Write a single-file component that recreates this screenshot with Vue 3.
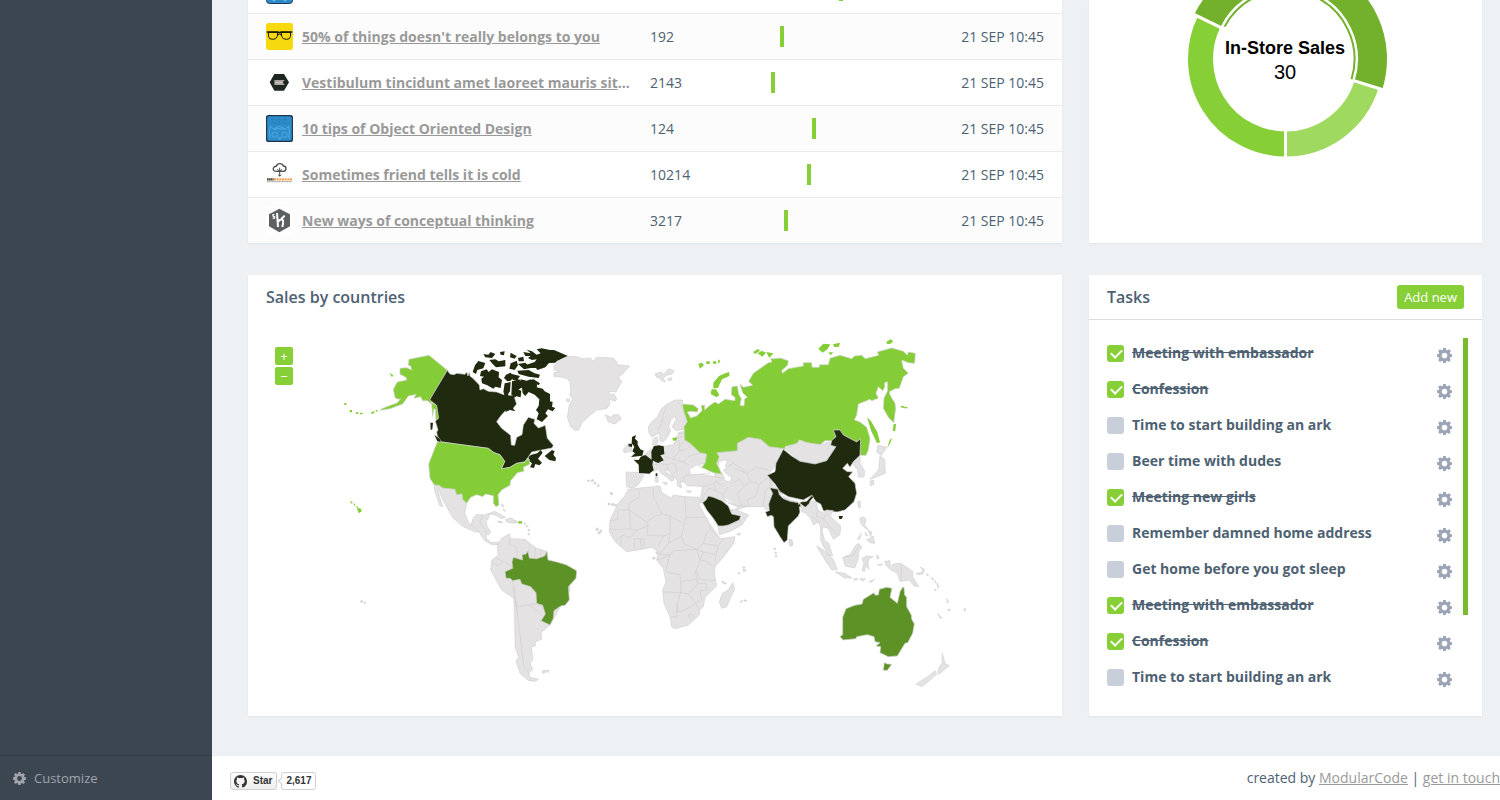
<script setup>
import { ref } from 'vue'

const rows = [
  { id: 1, icon: 'glasses', title: "50% of things doesn't really belongs to you", more: '', count: 192, mark: 20 },
  { id: 2, icon: 'hex', title: 'Vestibulum tincidunt amet laoreet mauris sit', more: '...', count: 2143, mark: 15.5 },
  { id: 3, icon: 'blue', title: '10 tips of Object Oriented Design', more: '', count: 124, mark: 36 },
  { id: 4, icon: 'cloud', title: 'Sometimes friend tells it is cold', more: '', count: 10214, mark: 33.5 },
  { id: 5, icon: 'kube', title: 'New ways of conceptual thinking', more: '', count: 3217, mark: 22 }
]

const tasks = ref([
  { id: 1, text: 'Meeting with embassador', done: true },
  { id: 2, text: 'Confession', done: true },
  { id: 3, text: 'Time to start building an ark', done: false },
  { id: 4, text: 'Beer time with dudes', done: false },
  { id: 5, text: 'Meeting new girls', done: true },
  { id: 6, text: 'Remember damned home address', done: false },
  { id: 7, text: 'Get home before you got sleep', done: false },
  { id: 8, text: 'Meeting with embassador', done: true },
  { id: 9, text: 'Confession', done: true },
  { id: 10, text: 'Time to start building an ark', done: false }
])

const cx = 196.5
const cy = 59
const point = (r, deg) => {
  const a = (deg * Math.PI) / 180
  return `${(cx + r * Math.cos(a)).toFixed(2)},${(cy + r * Math.sin(a)).toFixed(2)}`
}
const sector = (inner, outer, from, to) => {
  const large = to - from > 180 ? 1 : 0
  return `M${point(outer, from)} A${outer},${outer} 0 ${large} 1 ${point(outer, to)} L${point(inner, to)} A${inner},${inner} 0 ${large} 0 ${point(inner, from)}Z`
}
const arc = (r, from, to) => `M${point(r, from)} A${r},${r} 0 ${to - from > 180 ? 1 : 0} 1 ${point(r, to)}`
const slices = [
  { color: '#9fd95f', d: sector(71, 99, 17.5, 90) },
  { color: '#86cf36', d: sector(71, 99, 90, 206) },
  { color: '#73b02c', d: sector(71, 103, 206, 377.5) }
]

const gear = 'M6.6 0h2.8l.4 2 1.3.5L12.800 1.300l2 2-1.200 1.700.5 1.300 1.900.300v2.800l-1.900.400-.5 1.300 1.200 1.700-2 2-1.700-1.200-1.300.5-.4 2H6.600l-.4-2-1.300-.5-1.700 1.200-2-2 1.200-1.700-.5-1.300L0 9.400V6.600l1.900-.3.5-1.300L1.200 3.300l2-2 1.700 1.200L6.200 2zM8 5a3 3 0 1 0 0 6a3 3 0 1 0 0-6z'
</script>

<template>
  <div class="app">
    <aside class="sidebar">
      <a href="#" class="customize">
        <svg class="cog" viewBox="0 0 16 16" aria-hidden="true"><path fill-rule="evenodd" :d="gear" /></svg>
        Customize
      </a>
    </aside>

    <div class="page">
      <main class="grid">
        <section class="card feed">
          <table>
            <colgroup><col class="c-title"><col class="c-count"><col class="c-chart"><col class="c-date"></colgroup>
            <tbody>
              <tr class="peek">
                <td>
                  <div class="peek-box">
                    <svg class="peek-icon" viewBox="0 0 27 27" aria-hidden="true">
                      <rect x=".5" y=".5" width="26" height="26" rx="3" fill="#2d8ac7" stroke="#1d3b5c" />
                      <path d="M7 24q7-6 13 0" fill="none" stroke="#65bdf0" stroke-width="2" />
                    </svg>
                  </div>
                </td>
                <td></td>
                <td><div class="peek-box"><div class="spark"><i class="tick" :style="{ marginLeft: '49.5%' }"></i></div></div></td>
                <td></td>
              </tr>
              <tr v-for="r in rows" :key="r.id">
                <td>
                  <div class="title">
                    <svg v-if="r.icon === 'glasses'" class="avatar" viewBox="0 0 81 81" aria-hidden="true">
                      <rect width="81" height="81" rx="8" fill="#f6d90f" />
                      <g fill="none" stroke="#171608" stroke-width="3">
                        <path d="M7 28q-1 14 4 19 9 4 18 0 7-5 6-19zM46 28q-1 14 6 19 9 4 18 0 5-5 4-19z" />
                        <path d="M2 27h33q6 3 11 0h33" stroke-width="5" />
                        <path d="M35 36q5-5 11 0" />
                      </g>
                    </svg>
                    <svg v-else-if="r.icon === 'hex'" class="avatar" viewBox="0 0 81 81" aria-hidden="true">
                      <path d="M25 15h29l15 25-15 25H25L11 40z" fill="#202720" />
                      <path d="M25 33h31l-6 7 6 8H25z" fill="#a9a4a2" />
                      <path d="M28 41h22" stroke="#d1cdcb" stroke-width="3" />
                    </svg>
                    <svg v-else-if="r.icon === 'blue'" class="avatar" viewBox="0 0 81 81" aria-hidden="true">
                      <rect x="1.500" y="1.500" width="78" height="78" rx="8" fill="#2c8dca" stroke="#20334d" stroke-width="4" />
                      <path d="M10 14h61M10 24h61M22 6v22M40 6v22M58 6v22" stroke="#2680ba" stroke-width="2" />
                      <g fill="none" stroke="#62b6e8" stroke-width="2">
                        <path d="M13 70q-5-20 0-36l10 8 12-6q5-2 10 0l13 6 10-8q5 16 0 36M24 44q16-8 32 0" />
                        <circle cx="26" cy="59" r="8" /><circle cx="56" cy="59" r="8" />
                        <path d="M35 68h12M36 72h10" />
                      </g>
                    </svg>
                    <svg v-else-if="r.icon === 'cloud'" class="avatar" viewBox="0 0 81 81" aria-hidden="true">
                      <g fill="none" stroke="#4b4f50" stroke-width="4">
                        <path d="M30 31q-10-1-8-9 2-7 9-6 2-8 11-8 8 0 10 7 8 0 8 8 0 7-8 8z" />
                        <path d="M41 20v23M34 24q2 6 7 6t7-6" stroke-width="3" />
                      </g>
                      <path d="M35 41h12l-6 6z" fill="#4b4f50" />
                      <path d="M3 55h20" stroke="#4b4036" stroke-width="7" stroke-dasharray="5 1" />
                      <path d="M24 55h54" stroke="#f0a04a" stroke-width="7" stroke-dasharray="6 2" />
                      <path d="M3 62h75" stroke="#9a9a9a" stroke-width="3" stroke-dasharray="4 1" />
                    </svg>
                    <svg v-else class="avatar" viewBox="0 0 81 81" aria-hidden="true">
                      <rect width="81" height="81" rx="8" fill="#fff" />
                      <path d="M40 5l32 17v36L40 76 9 58V22z" fill="#5d6061" />
                      <path d="M25 22q-6 0-4 5l5 3q1 5-6 4" fill="none" stroke="#fff" stroke-width="4" />
                      <path d="M33 18l3 42M36 45q5-10 13-7 5 3 0 22M46 36l10-10" fill="none" stroke="#fff" stroke-width="6" />
                    </svg>
                    <span class="clip"><a href="#">{{ r.title }}</a>{{ r.more }}</span>
                  </div>
                </td>
                <td>{{ r.count }}</td>
                <td><div class="spark"><i class="tick" :style="{ marginLeft: r.mark + '%' }"></i></div></td>
                <td class="date">21 SEP 10:45</td>
              </tr>
            </tbody>
          </table>
        </section>

        <section class="card donut">
          <svg viewBox="0 0 393 242" role="img" aria-label="In-Store Sales 30">
            <path v-for="s in slices" :key="s.d" :d="s.d" :fill="s.color" stroke="#fff" stroke-width="3" />
            <path :d="arc(69, 208, 377)" fill="none" stroke="#73b02c" stroke-width="2" />
            <text x="196" y="54" class="d-name">In-Store Sales</text>
            <text x="196" y="79" class="d-value">30</text>
          </svg>
        </section>

        <section class="card countries">
          <h2>Sales by countries</h2>
          <div class="map-wrap">
            <div class="zoomers">
              <button type="button" aria-label="Zoom in">+</button>
              <button type="button" aria-label="Zoom out">−</button>
            </div>
            <svg class="map" viewBox="266 338 778 360" aria-hidden="true">
              <!-- North America -->
              <g transform="translate(340 330) scale(.33333)">
                <path class="g" d="M282 464L298 466 308 474 345 478 350 494 366 492 368 508 380 520 374 548 386 580 408 588 420 580 426 558 446 550 448 560 438 575 442 590 452 605 446 615 430 606 405 606 370 590 340 565 322 535 302 495 298 478 294 480 300 505 308 530 300 528 285 486Z" />
                <path class="l" d="M267 76L322 121 270 208 274 218 290 225 296 262 288 272 286 238 282 236 278 260 275 222 262 212 248 212 242 200 222 205 228 193 205 198 188 222 150 236 120 241 125 236 172 218 182 206 176 208 165 203 160 178 172 156 200 150 198 142 180 133 180 115 200 113 215 120 212 108 205 106 207 88Z" />
                <path class="l isle" d="M148 128L160 136 156 142ZM106 240h8l-4 6zM94 246l10-2-2 6-8 2zM60 248h8v5h-8zM48 247h7v5h-7zM29 240h7v7h-7zM13 219h6v6h-6zM29 512l9 5-3 5zM40 519l6 4-3 5zM48 527l7 4-3 5zM51 536l9-2 6 9-10 7z" />
                <path class="d" d="M322 121L330 132 342 134 350 130 375 133 380 126 384 138 388 126 390 138 400 146 418 165 420 180 430 176 445 184 470 186 492 194 498 178 506 196 518 196 528 185 524 205 530 222 520 235 500 238 482 258 470 275 485 295 512 316 514 345 524 346 530 322 546 314 550 285 565 262 585 268 582 280 595 294 616 286 622 325 640 346 636 354 605 360 575 366 567 378 555 395 530 400 510 412 484 417 494 394 480 374 462 368 445 355 370 345 305 336 292 318 290 306 294 300 286 274 296 264 290 226 272 212 270 208Z" />
                <path class="d isle" d="M542 148L560 152 572 148 584 156 592 164 590 172 608 176 614 184 630 192 630 214 638 216 636 230 646 234 638 244 624 238 616 250 624 258 606 276 590 268 596 250 588 240 596 228 598 208 584 194 566 186 556 198 548 190 546 174 538 165ZM423 124L440 118 446 126 456 118 477 126 476 142 486 150 482 174 466 170 460 176 442 166 426 160 424 146 432 140 420 138ZM398 126L405 106 415 93 436 99 430 115 412 120 408 132ZM590 58L605 55 630 60 642 60 684 78 652 92 646 98 627 99 616 112 592 120 588 114 570 114 560 104 584 96 590 88 576 90 564 84 572 78 556 78 550 66 572 70 560 59 576 64 590 74 602 70ZM430 72L445 74 452 66 466 72 456 84 436 82ZM480 66L494 64 492 76 482 74ZM448 90L466 88 476 94 496 90 496 109 468 112 458 102ZM512 68L530 78 524 86 510 82ZM534 84L550 80 552 94 536 94ZM512 100L530 92 534 106 524 120 508 116ZM534 102L556 98 572 114 552 118ZM532 122L566 120 584 130 600 134 596 144 566 140 536 132ZM498 134L512 128 522 140 512 152 502 154 492 144ZM516 132L540 138 532 150 518 150ZM494 160L512 156 510 184 498 202 490 186ZM516 154L538 148 548 170 532 182 527 202 514 194ZM526 176L544 182 542 202 526 198ZM498 226L512 226 526 244 510 240 496 246ZM271 278h8l-2 20-5 2zM283 314L300 328 304 338 292 334ZM574 374L592 370 602 360 608 368 594 386 606 398 598 406 586 402 582 414 570 412 576 400 566 392 566 380ZM614 378L636 360 644 364 640 374 648 384 646 394 628 390ZM578 146l22 14-4 6-20-14z" />
                <path class="l" d="M305 336L445 355 462 368 480 374 494 394 484 417 510 412 530 400 555 397 560 388 568 388 570 402 550 412 552 424 532 428 512 452 510 466 485 480 474 494 477 525 468 530 460 520 460 497 436 492 428 500 410 494 392 502 380 520 368 508 366 492 350 494 345 478 308 474 298 466 282 464 270 445 266 402 280 366 292 336Z" />
              </g>

              <!-- Greenland, Iceland, Caribbean -->
              <g transform="translate(480 330) scale(.33333)">
                <path class="g" d="M222 108L240 90 260 80 290 80 306 86 330 84 340 94 350 82 400 84 412 98 408 104 450 108 440 118 430 130 415 142 426 155 416 170 408 186 388 184 388 194 402 192 410 206 406 214 388 208 390 222 380 236 350 240 330 256 306 278 296 300 286 302 272 290 262 262 268 225 278 208 270 196 272 184 270 156 262 146 240 140 222 140 222 128 240 124 222 120ZM376 254L392 262 400 254 416 254 424 266 405 282 385 276ZM260 206l10 2-2 8-8-2zM525 132L544 128 540 142 530 142ZM64 522l8 6-4 4zM70 536l6 6-4 2zM24 552L44 544 76 562 66 566 48 556 30 552ZM78 568l30 4 4 6-30-2zM52 574l12 2-4 4zM322 450h6v4h-6zM334 450l5-2 1 5-5 2zM344 458h4v4h-4zM354 464h3v3h-3zM392 488h4v6h-4zM386 520h4v4h-4zM396 522l6-2-2 6zM404 524h4v4h-4z" />
                <path class="l isle" d="M115 574h11v6h-11z" />
              </g>

              <!-- Europe and central Asia -->
              <g transform="translate(600 330) scale(.33333)">
                <path class="g" d="M145 290L158 272 172 262 184 236 202 222 225 210 248 210 246 220 250 240 260 268 256 290 252 298 228 302 216 290 228 270 226 258 212 270 206 292 212 302 202 322 190 336 180 332 178 308 156 322 147 308ZM160 326L172 320 174 334 168 346 158 344ZM166 132L184 126 190 134 206 116 222 122 216 132 198 136 190 146 196 156 184 152ZM202 148l12-6 2 8-8 2z" />
                <path class="g" d="M190 350L220 344 228 330 236 308 254 304 254 330 270 342 300 368 320 374 316 398 296 406 290 414 276 410 268 424 268 434 250 440 258 448 254 456 240 456 246 474 232 468 232 452 222 440 206 424 192 416 200 428 220 440 222 450 214 454 204 444 184 430 174 418 158 426 156 400 130 376 150 360ZM70 358L84 344 96 350 94 364 72 368ZM78 426L118 428 132 436 118 460 108 470 94 474 80 470ZM188 456l14 2-4 8zM166 442h8v14h-8zM258 484l16-2-4 6z" />
                <path class="g" d="M350 395L350 368 412 362 412 340 445 322 482 328 508 350 555 356 540 380 528 405 503 436 525 470 545 490 520 540 500 540 490 530 440 530 405 525 382 505 366 500 356 516 330 498 322 516 306 520 302 500 308 470 288 468 262 468 250 452 254 438 296 432 345 440 345 426 365 432 366 416Z" />
                <path class="b" d="M190 262L176 300M202 224L186 262M234 216L246 232M192 378L218 388 240 362 236 330M190 350L194 376M238 352L254 332M240 362L262 356 276 340M218 388L250 396 268 378 300 370M172 398L196 404 222 400 232 418 220 430M200 404L206 420M250 396L266 404M234 310L252 310M228 324L250 320M158 404L176 404M340 440L370 446M308 470L340 462 350 450M346 455L368 468M395 460L420 446 432 470 412 490 424 528M432 470L452 456 440 430 404 416M452 456L478 462 508 440M478 462L466 500 440 510 450 528M508 440L514 466 496 484 490 528M440 430L470 412 505 420M384 410L400 400 440 426M330 498L346 476 344 462M366 500L384 470" />
                <path class="w" d="M268 418L280 410 292 404 302 412 322 414 330 430 302 432 272 434ZM356 396L370 390 384 392 376 406 380 416 370 420 384 436 396 440 390 456 374 452 372 440 362 424 356 410Z" />
                <path class="l" d="M248 222L280 225 295 236 292 246 272 244 262 246 272 264 290 258 306 242 304 226 314 226 314 240 330 226 345 216 355 222 375 208 405 212 405 202 394 194 396 170 412 168 416 192 424 206 420 226 432 228 434 206 442 202 428 188 420 162 430 172 458 166 446 154 460 130 505 98 516 96 512 86 524 86 540 84 565 92 563 105 545 122 548 130 565 116 610 108 610 98 635 98 636 112 658 112 658 104 685 104 690 85 720 76 755 86 764 78 785 76 796 86 836 76 832 66 875 54 910 64 922 76 925 66 946 70 944 100 925 98 905 90 910 115 925 130 910 140 898 175 886 176 868 185 870 195 885 220 887 236 881 278 865 262 850 235 852 205 863 182 862 155 854 158 854 172 848 182 835 170 828 190 835 205 815 212 810 208 775 222 770 255 763 270 780 276 800 292 810 325 805 360 798 376 782 376 780 358 782 326 770 336 725 312 720 300 700 300 708 318 698 332 675 332 660 344 620 338 598 330 592 340 555 350 555 356 508 350 482 328 445 322 412 340 412 362 350 368 358 380 350 400 365 432 340 428 305 412 316 398 320 372 300 368 270 340 254 330 252 290 262 275 250 240Z" />
                <path class="l isle" d="M388 126L388 138 366 148 354 174 340 175 340 158 357 138 376 130ZM335 178L348 178 358 194 350 202 332 192ZM295 101L306 98 312 106 300 116ZM319 94h10v8h-10zM339 94h10v7h-10zM353 88l8 5-5 9zM459 66L474 57 480 62 466 72ZM473 70L486 62 498 68 487 80ZM499 66L520 70 508 84ZM655 56L670 41 691 43 683 57 668 68ZM699 43L720 38 717 50 703 51ZM685 67h15l-8 9zM861 34L872 28 880 34 870 42 859 41ZM801 262L813 274 832 306 840 337 831 340 814 304ZM881 282h7l-2 20-8 2zM869 330l7-6-5 15-9 14zM902 227l12 2-2 5-9-2zM217 325L230 321 230 331 219 332ZM913 231h9v4h-9z" />
                <path class="d isle" d="M96 321L108 315 105 326 113 334 113 344 121 358 131 362 127 377 93 381 105 370 97 364 103 350 95 340ZM85 341L96 341 96 351 86 349ZM101 389L116 390 122 380 136 375 159 392 157 404 161 420 148 431 117 429 116 404ZM161 349L176 346 191 349 193 372 181 376 191 391 174 399 155 390 154 366ZM167 430h5v9h-5z" />
              </g>

              <!-- East Asia -->
              <g transform="translate(760 330) scale(.33333)">
                <path class="g" d="M75 355L112 340 118 330 140 338 180 344 212 335 228 350 200 390 165 402 120 394ZM284 390L300 376 300 400 314 424 312 440 296 442 292 418 280 405ZM354 346L380 352 364 376 350 366ZM360 378L374 388 376 430 350 440 330 448 356 420ZM330 454l10-4 2 12-10 6zM292 516l8-4 2 20-6 2z" />
                <path class="d" d="M70 358L95 378 120 394 165 402 200 392 228 350 212 346 215 332 228 320 220 300 240 300 250 315 290 336 302 326 300 376 280 395 270 412 262 400 248 415 262 425 278 425 266 440 285 460 290 490 282 515 255 540 232 546 190 542 182 522 168 515 155 496 130 510 85 500 60 485 45 462 22 436 45 425 48 400Z" />
                <path class="d isle" d="M236 558h13l-4 9h-7z" />
              </g>

              <!-- Africa, Arabia, India -->
              <g transform="translate(590 460) scale(.33333)">
                <path class="g" d="M115 88L150 84 210 78 215 98 245 115 250 105 285 110 328 112 334 128 325 130 355 185 385 228 392 236 435 230 432 248 405 285 375 320 373 340 380 378 345 412 340 440 328 450 328 465 295 495 255 506 245 500 240 470 222 430 218 390 228 365 220 325 200 300 205 275 185 262 145 270 110 275 75 245 58 215 60 180 85 130 104 108ZM428 368L434 386 410 440 395 445 388 425 398 400 416 388Z" />
                <path class="g" d="M338 110L358 84 395 100 406 122 440 138 475 138 440 150 476 165 455 195 425 212 388 224 384 198 340 130ZM580 108L600 120 625 126 624 130 596 124 580 114ZM598 238L606 240 608 256 600 258ZM18 206h6v5h-6zM30 210h5v5h-5zM26 216h5v5h-5zM4 60h6v4H4zM12 68h5v4h-5zM22 76h5v3h-5zM62 98h5v5h-5zM54 130h5v4h-5zM64 132h7v4h-7zM76 134h4v4h-4zM198 276h5v5h-5zM188 292h7v5h-7zM440 222l12-2-4 6zM458 320l8 2-6 4zM460 328h7v6h-7zM444 338h5v4h-5zM396 364h5v4h-5zM402 368h6v4h-6zM450 424l8-2-4 6zM462 420h8v4h-8zM552 264h4v5h-4zM555 276h4v5h-4zM556 286h4v5h-4z" />
                <path class="b" d="M145 86L150 110 118 130 118 150 88 150M60 182L84 178 84 150M118 150L122 206 72 210 60 206M118 150L170 186 196 168 214 162 205 138 190 110 190 84M285 110L288 172 346 172M288 172L280 208 274 228 282 252 320 268 340 250 384 258 400 236M240 168L280 190M214 162L240 168 240 220 222 228 170 226 175 196 170 186M122 206L140 212 175 196M78 240L96 226 122 232 140 212M96 226L92 256M132 268L134 236 162 236 162 266M154 268L152 236M222 228L204 258M240 220L236 250 208 284M236 250L274 228M208 284L240 284 252 272 320 268 330 300 316 340 322 358 272 364 270 344 228 336M200 300L230 290 240 284 228 330M330 300L350 304 372 322M320 268L340 276 330 300M340 276L378 284 384 258M378 284L375 310M316 330L330 358 376 362M272 364L272 398 218 396M272 398L296 402 322 372 322 358M322 372L348 370 350 390 330 392 336 420 318 430 296 402M272 398L262 430 264 456 284 450 318 430M262 430L260 470 242 470M318 430L328 452M294 466L304 460 312 470 302 478ZM350 172L362 208 384 230M340 250L350 220 362 208M452 168L448 180 415 195 386 198M448 180L460 196M424 150L425 164 452 168" />
                <path class="w" d="M408 118L416 130 444 140 440 146 422 150 404 126Z" />
                <path class="d" d="M338 128L348 120 355 108 370 112 395 122 415 138 425 162 452 168 448 180 415 195 400 198 385 198 370 175 350 150ZM545 84L564 88 568 104 580 116 600 124 625 128 626 134 632 126 650 124 666 106 670 112 660 124 656 154 646 150 642 142 628 140 630 156 625 168 595 198 592 240 582 248 570 230 552 200 550 170 544 166 532 170 526 156 538 152 536 132 548 100 540 84Z" />
              </g>

              <!-- Central and South America -->
              <g transform="translate(470 510) scale(.33333)">
                <path class="g" d="M8 28L18 14 38 14 30 34 32 44 48 60 50 88 66 98 84 96 86 104 66 104 44 92 32 74 26 62 4 46ZM85 100L96 84 118 72 122 86 165 88 180 100 200 115 232 125 235 150 290 165 300 240 240 345 213 368 215 388 196 395 196 408 184 410 188 450 180 460 188 478 176 490 180 502 206 508 195 514 176 512 150 490 138 452 146 440 136 414 132 265 95 240 62 180 66 150 85 135 82 115ZM216 484l10-4v8l-8 2zM228 482l8-2-2 8zM108 28L124 24 140 36 126 40 108 34ZM88 34l10 2-4 3zM162 40h4v3h-4zM170 46h4v4h-4zM174 58h4v5h-4zM174 70h4v5h-4zM380 54h4v5h-4zM384 66h4v5h-4z" />
                <path class="b" d="M118 86L118 104 140 112 142 144M64 154L84 168 98 154 128 170M98 154L78 144M178 104L176 126M196 114L194 140M212 118L212 140M128 212L134 268 146 290 174 284 200 282M134 268L142 310 150 370 156 430 162 470 178 490M174 284L200 300 218 318M200 282L222 296M132 230L142 310" />
                <path class="m" d="M105 185L128 175 126 156 130 142 158 150 156 134 168 132 174 124 178 144 200 146 224 138 230 124 234 150 260 156 290 165 320 182 318 205 295 230 298 270 285 286 272 288 252 302 250 325 240 345 213 332 226 312 218 286 200 280 198 248 182 230 155 222 150 208 128 212 120 205 108 205Z" />
                <path class="l isle" d="M145 34h11v6h-11z" />
              </g>

              <!-- Oceania and south-east Asia -->
              <g transform="translate(780 500) scale(.33333)">
                <path class="g" d="M60 10L76 22 96 2 110 10 112 28 128 38 140 30 160 32 150 48 182 78 180 104 160 118 146 86 130 80 126 92 134 122 146 130 158 168 146 166 130 138 122 120 122 84 116 66 100 74 92 56 76 38 66 36ZM110 138L130 150 160 178 172 208 156 210 136 182ZM166 216L194 220 216 234 194 234ZM188 172L210 164 226 138 234 130 246 140 236 156 234 180 224 204 196 198ZM246 176L260 168 280 170 266 176 264 190 266 208 256 196 254 214 246 212 252 190ZM222 236h10v4h-10zM238 236l18 0-8 8zM268 244l16-6-12 10zM240 54L250 50 258 58 254 76 268 92 252 82 242 70ZM260 120L280 108 284 130 270 128ZM232 118l12-18-4 16zM256 96l6 12h-4zM266 94l10 2-4 14zM290 164l8 8-6 6zM292 194l16-2-8 5zM314 184L330 182 330 200 340 192 362 190 398 214 398 230 416 260 402 258 388 240 360 244 352 220 330 208 318 196ZM408 220L424 218 430 206 420 202 434 208 428 222 414 224ZM440 220l6 6-4 2zM454 232l8 6-4 2zM464 242l6 8-4-1zM472 250l5 14-5-4zM464 268h4v4h-4zM500 296l6 10-4 2zM504 328h5v4h-5zM552 326h5v5h-5zM472 340L486 354 482 356ZM487 460L495 490 507 497 475 524 476 504 486 490ZM466 512L470 522 445 545 425 560 408 552 440 532ZM28 118L38 124 36 138 28 136ZM-1248 306h5v4h-5zM-1258 302h6v5h-6z" />
                <path class="b" d="M364 192V244M112 28L110 50 130 56 148 80 172 104M130 56L140 40M194 170L220 166 232 144M96 50L118 66" />
                <path class="m" d="M180 410L188 404 188 352 198 326 224 316 246 312 250 298 282 278 285 285 295 285 298 268 320 262 336 265 330 292 352 310 360 275 368 262 372 262 374 285 380 292 380 320 394 345 395 357 403 372 398 400 383 428 375 430 352 468 325 470 300 458 302 440 288 438 300 428 285 425 282 410 262 404 230 410 228 416 190 420ZM313 488L322 492 335 493 322 511 310 511Z" />
              </g>
            </svg>
          </div>
        </section>

        <section class="card tasks">
          <header>
            <h2>Tasks</h2>
            <button type="button" class="add">Add new</button>
          </header>
          <div class="scroller">
            <ul>
              <li v-for="t in tasks" :key="t.id">
                <label :class="{ done: t.done }"><input v-model="t.done" type="checkbox"><span>{{ t.text }}</span></label>
                <button type="button" class="gear" aria-label="Task options">
                  <svg viewBox="0 0 16 16"><path fill-rule="evenodd" :d="gear" /></svg>
                </button>
              </li>
            </ul>
            <div class="thumb"></div>
          </div>
        </section>
      </main>

      <footer>
        <div class="github">
          <a href="#" class="star">
            <svg viewBox="0 0 16 16" aria-hidden="true"><path d="M8 0C3.580 0 0 3.580 0 8c0 3.540 2.290 6.530 5.470 7.590.4.070.550-.170.550-.380V13.700c-2.230.480-2.700-1.070-2.700-1.070-.360-.920-.890-1.170-.890-1.170-.730-.500.050-.490.050-.490.810.060 1.230.830 1.230.830.720 1.230 1.880.870 2.340.670.070-.520.280-.870.500-1.070C4.770 11.200 2.900 10.500 2.900 7.450c0-.870.310-1.590.830-2.150-.080-.200-.360-1.020.080-2.120 0 0 .670-.210 2.200.820A7.600 7.600 0 0 1 10 4c1.530-1.040 2.200-.820 2.200-.820.440 1.100.160 1.920.080 2.120.510.560.820 1.270.820 2.150 0 3.060-1.870 3.740-3.650 3.940.290.250.540.730.540 1.480v2.200c0 .210.150.460.550.380A8 8 0 0 0 16 8c0-4.420-3.580-8-8-8z" /></svg>
            Star
          </a>
          <a href="#" class="stars">2,617</a>
        </div>
        <p>created by <a href="#">ModularCode</a> | <a href="#">get in touch</a></p>
      </footer>
    </div>
  </div>
</template>

<style>
body { background: #edf1f4; overflow: hidden; }
</style>

<style scoped>
* { box-sizing: border-box; }
.app { display: flex; min-height: 100vh; font: 14px/20px "Open Sans", sans-serif; color: #4d6172; }
.sidebar { width: 212px; flex: none; background: #3b4651; display: flex; flex-direction: column; justify-content: flex-end; }
.customize { display: flex; align-items: center; gap: 8px; height: 45px; padding: 0 13px; border-top: 1px solid #323c47; color: #a0a3aa; font-size: 13px; text-decoration: none; }
.cog { width: 13px; height: 13px; fill: #a0a3aa; }
.page { flex: 1; min-width: 0; display: flex; flex-direction: column; justify-content: space-between; }
.grid { display: grid; grid-template-columns: minmax(0, 814fr) minmax(0, 393fr); column-gap: 27px; row-gap: 32px; padding: 0 18px 0 36px; }
.card { background: #fff; box-shadow: 0 1px 2px #dfe5ea; }
h2 { margin: 0; font-size: 16px; font-weight: 600; line-height: 22px; }

table { width: 100%; border-spacing: 0; table-layout: fixed; }
.c-title { width: 49.4%; }
.c-count { width: 11%; }
.c-chart { width: 24.6%; }
.c-date { width: 15%; }
td { height: 46px; padding: 0; border-top: 1px solid #e8eaec; }
tr:nth-child(even) { background: #fcfcfc; }
.peek td { height: 13px; border-top: 0; vertical-align: top; }
.peek-box { height: 13px; overflow: hidden; display: flex; align-items: flex-start; }
.peek-icon { width: 27px; height: 27px; margin: -23px 0 0 18px; flex: none; }
.peek-box .spark { flex: 1; margin-top: -20px; }
.title { display: flex; align-items: center; gap: 9px; padding: 0 0 0 18px; }
.avatar { width: 27px; height: 27px; flex: none; }
.clip { min-width: 0; overflow: hidden; white-space: nowrap; text-overflow: ellipsis; font-weight: 700; color: #999; }
.clip a { color: #999; }
.spark { height: 21px; width: 100%; }
.tick { display: block; width: 4px; height: 21px; background: #86cf36; }
.date { padding-right: 18px; text-align: right; white-space: nowrap; }

.donut svg { display: block; width: 100%; }
.d-name { font: 700 18px "Liberation Sans", Arial, sans-serif; text-anchor: middle; }
.d-value { font: 20px "Liberation Sans", Arial, sans-serif; text-anchor: middle; }

.countries { padding: 11px 18px 18px; }
.map-wrap { position: relative; margin-top: 30px; }
.map { display: block; width: 100%; }
.zoomers { position: absolute; left: 9px; top: 9px; display: grid; gap: 2px; }
.zoomers button { width: 18px; height: 18px; padding: 0; border: 0; border-radius: 2px; background: #86cf36; color: #fff; font: 13px/18px "Open Sans", sans-serif; }
.map path { stroke: #d0d0d0; stroke-width: 2; stroke-linejoin: round; }
.map .g { fill: #e4e2e3; }
.map .l { fill: #84cd36; }
.map .m { fill: #5d9226; }
.map .d { fill: #1f2a0e; }
.map .b { fill: none; }
.map .w { fill: #fff; }
.map .isle { stroke: none; }

.tasks { display: flex; flex-direction: column; }
.tasks header { display: flex; align-items: center; justify-content: space-between; height: 45px; padding: 0 18px; border-bottom: 1px solid #dcdcdf; }
.add { height: 24px; padding: 0 7px; border: 0; border-radius: 3px; background: #86cf36; color: #fff; font: 13px "Open Sans", sans-serif; }
.scroller { position: relative; flex: 1; padding: 15px 30px 15px 18px; }
ul { margin: 0; padding: 0; list-style: none; }
li { display: flex; align-items: center; justify-content: space-between; height: 36px; }
label { display: flex; align-items: center; gap: 8px; font-weight: 700; }
.done span { text-decoration: line-through; }
input { appearance: none; position: relative; width: 17px; height: 17px; margin: 0; border-radius: 3px; background: #c9cfda; }
input:checked { background: #86cf36; }
input:checked::after { content: ""; position: absolute; left: 4px; top: 4px; width: 9px; height: 5px; border: solid #fff; border-width: 0 0 2px 2px; transform: rotate(-45deg); }
.gear { padding: 5px 0 0; border: 0; background: none; }
.gear svg { display: block; width: 15px; height: 15px; fill: #9ba5b5; }
.thumb { position: absolute; top: 18px; right: 14px; width: 5px; height: 277px; background: #78bb2e; }

footer { display: flex; align-items: center; justify-content: space-between; height: 44px; padding-left: 18px; background: #fff; }
footer p { margin: 0; white-space: nowrap; }
footer p a { color: #999; }
.github { display: flex; gap: 4px; padding-top: 6px; font: 700 10px/16px "Liberation Sans", Arial, sans-serif; }
.github a { display: flex; align-items: center; height: 18px; border: 1px solid #d0d0d0; border-radius: 3px; color: #333; text-decoration: none; }
.star { gap: 6px; padding: 0 4px 0 3px; background: linear-gradient(#fcfcfc, #eee); }
.star svg { width: 13px; height: 13px; fill: #333; }
.stars { position: relative; padding: 0 4px; background: #fff; }
.stars::before { content: ""; position: absolute; left: -3px; top: 5px; width: 5px; height: 5px; border: solid #d0d0d0; border-width: 0 0 1px 1px; background: #fff; transform: rotate(45deg); }
</style>
